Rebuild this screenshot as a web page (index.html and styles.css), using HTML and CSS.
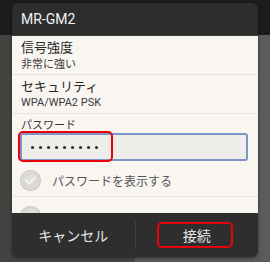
FILE: index.html
```html
<!DOCTYPE html>
<html lang="ja">
<head>
<meta charset="utf-8">
<link rel="stylesheet" href="styles.css">
</head>
<body>
<div class="dialog">
  <div class="title">MR-GM2</div>
  <div class="content">
    <div class="row">
      <div class="label">信号強度</div>
      <div class="value">非常に強い</div>
    </div>
    <div class="row">
      <div class="label">セキュリティ</div>
      <div class="value latin">WPA/WPA2 PSK</div>
    </div>
    <div class="pw">
      <div class="pw-label">パスワード</div>
      <div class="input">
        <span class="dots"><i></i><i></i><i></i><i></i><i></i><i></i><i></i><i></i><i></i></span>
        <span class="mark mark-input"></span>
      </div>
      <div class="check">
        <span class="circle">
          <svg width="21" height="21" viewBox="0 0 21 21"><path d="M6 10.5 L9.2 13.6 L15 7.5" fill="none" stroke="#f4f2ef" stroke-width="2.2" stroke-linecap="round" stroke-linejoin="round"/></svg>
        </span>
        <span class="check-label">パスワードを表示する</span>
      </div>
    </div>
    <div class="more">
      <span class="circle"></span>
    </div>
  </div>
  <div class="buttons">
    <div class="btn">キャンセル</div>
    <div class="sep"></div>
    <div class="btn">接続<span class="mark mark-btn"></span></div>
  </div>
</div>
</body>
</html>
```
FILE: styles.css
```css
html, body {
  margin: 0;
  padding: 0;
}
body {
  width: 270px;
  height: 262px;
  overflow: hidden;
  font-family: "Noto Sans CJK JP", sans-serif;
  background:
    linear-gradient(to bottom, #1c1c1c 0 35px, transparent 35px),
    linear-gradient(to right, #434341 0 135px, #5d5b59 135px);
}
.dialog {
  margin: 3px 0 0 12px;
  width: 246px;
  height: 254px;
  border-radius: 6px;
  overflow: hidden;
  display: flex;
  flex-direction: column;
  box-shadow: 0 1px 3px rgba(0,0,0,0.5);
}
.title {
  height: 32px;
  flex: none;
  background: #2d2d2d;
  color: #f2f2f2;
  font-family: Roboto, sans-serif;
  font-size: 14px;
  line-height: 32px;
  padding-left: 9px;
  border-bottom: 1px solid #3a3a3a;
}
.content {
  flex: 1;
  background: #f9f6f2;
  overflow: hidden;
  display: flex;
  flex-direction: column;
}
.row {
  height: 39px;
  flex: none;
  padding: 2px 0 0 9px;
  box-sizing: border-box;
  border-bottom: 1px solid #e6e2dd;
}
.label {
  font-size: 13px;
  line-height: 18px;
  color: #262626;
}
.value {
  font-size: 11px;
  line-height: 15px;
  color: #3a3a3a;
}
.value.latin {
  font-family: Roboto, sans-serif;
}
.pw {
  flex: none;
  height: 83px;
  box-sizing: border-box;
  padding-top: 3px;
  border-bottom: 1px solid #e6e2dd;
}
.pw-label {
  font-size: 11px;
  line-height: 14px;
  padding-left: 9px;
  color: #333;
}
.input {
  position: relative;
  margin: 2px 0 0 8px;
  width: 228px;
  height: 28px;
  box-sizing: border-box;
  border: 2px solid #7d96c8;
  border-radius: 3px;
  background: #efede9;
  display: flex;
  align-items: center;
  padding-left: 9px;
}
.dots {
  display: flex;
  gap: 5px;
  margin-top: 1px;
}
.dots i {
  display: block;
  width: 3px;
  height: 3px;
  border-radius: 50%;
  background: #2a2a2a;
}
.mark {
  position: absolute;
  border: 2px solid #e8000b;
  border-radius: 5px;
}
.mark-input {
  left: -4px;
  top: -4px;
  width: 91px;
  height: 27px;
}
.check {
  display: flex;
  align-items: center;
  margin: 9px 0 0 8px;
  height: 21px;
}
.circle {
  width: 21px;
  height: 21px;
  border-radius: 50%;
  background: radial-gradient(circle at 50% 40%, #e2e0dc, #d3d1cd);
  box-shadow: inset 0 0 0 1px #cfccc8;
  display: block;
  flex: none;
}
.circle svg {
  display: block;
}
.check-label {
  margin-left: 11px;
  font-size: 12px;
  color: #555;
}
.more {
  flex: 1;
  padding: 9px 0 0 8px;
}
.buttons {
  height: 44px;
  flex: none;
  background: #2e2e2e;
  display: flex;
  align-items: center;
}
.btn {
  position: relative;
  flex: 1;
  text-align: center;
  color: #e6e6e6;
  font-size: 14px;
  line-height: 20px;
}
.sep {
  width: 1px;
  height: 28px;
  background: #3f3f3f;
}
.mark-btn {
  left: 21px;
  top: -3px;
  width: 72px;
  height: 22px;
}
```
